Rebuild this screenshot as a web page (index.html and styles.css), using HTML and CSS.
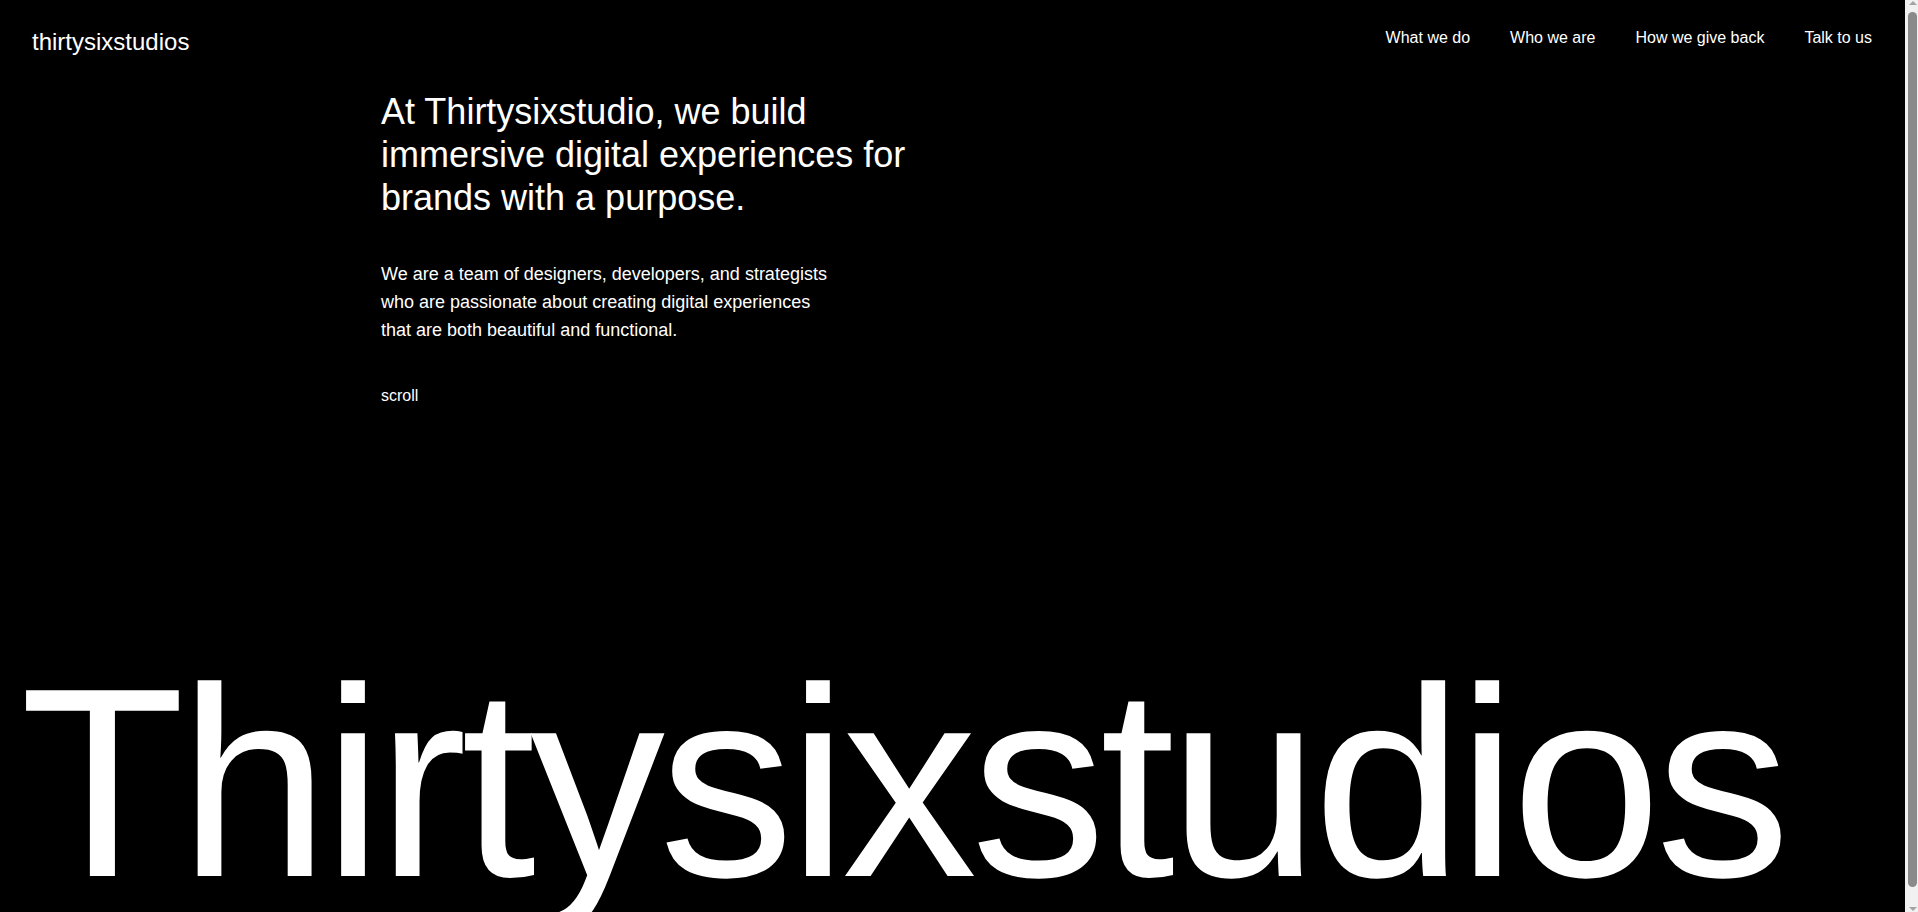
FILE: index.html
```html
<!DOCTYPE html>
<html lang="en">
<head>
<meta charset="utf-8">
<title>thirtysixstudios</title>
<link rel="stylesheet" href="styles.css">
</head>
<body>
<div class="page">
  <header class="site-header">
    <a class="logo" href="#">thirtysixstudios</a>
    <nav class="nav">
      <a href="#">What we do</a>
      <a href="#">Who we are</a>
      <a href="#">How we give back</a>
      <a href="#">Talk to us</a>
    </nav>
  </header>
  <main>
    <section class="hero">
      <h1 class="hero-title">At Thirtysixstudio, we build immersive digital experiences for brands with a purpose.</h1>
      <p class="hero-text">We are a team of designers, developers, and strategists who are passionate about creating digital experiences that are both beautiful and functional.</p>
      <div class="scroll">scroll</div>
    </section>
    <div class="big-title">Thirtysixstudios</div>
  </main>
</div>
<div class="scrollbar" aria-hidden="true">
  <span class="sb-arrow sb-up"></span>
  <span class="sb-thumb"></span>
  <span class="sb-arrow sb-down"></span>
</div>
</body>
</html>
```
FILE: styles.css
```css
html, body {
  margin: 0;
  padding: 0;
  background: #000;
  overflow: hidden;
}
body {
  color: #fff;
  font-family: "Liberation Sans", Arial, sans-serif;
  height: 100vh;
}
a {
  color: inherit;
  text-decoration: none;
}
.page {
  margin-right: 13px;
  height: 100vh;
  overflow: hidden;
}
.site-header {
  display: flex;
  justify-content: space-between;
  align-items: flex-start;
  padding: 28px 33px 0 32px;
}
.logo {
  font-size: 24px;
}
.nav {
  display: flex;
  gap: 40px;
  margin-top: 1px;
  font-size: 16px;
}
.hero {
  padding: 34px 0 0 20%;
}
.hero-title {
  margin: 0;
  max-width: 560px;
  font-size: 36px;
  line-height: 1.2;
  font-weight: 400;
}
.hero-text {
  margin: 40px 0 0;
  max-width: 455px;
  font-size: 18px;
  line-height: 28px;
}
.scroll {
  margin-top: 43px;
  font-size: 16px;
}
.big-title {
  margin-top: 243px;
  padding-left: 20px;
  font-size: 270px;
  line-height: 1;
  letter-spacing: -6px;
  white-space: nowrap;
}
.scrollbar {
  position: fixed;
  top: 0;
  right: 0;
  bottom: 0;
  width: 13px;
  background: #f1f1f1;
  display: flex;
  flex-direction: column;
  align-items: center;
}
.sb-arrow {
  width: 0;
  height: 0;
  border-left: 4px solid transparent;
  border-right: 4px solid transparent;
  margin-left: 2px;
}
.sb-up {
  margin-top: 1px;
  border-bottom: 4px solid #a3a3a3;
}
.sb-down {
  margin-top: auto;
  margin-bottom: 1px;
  border-top: 4px solid #a3a3a3;
}
.sb-thumb {
  margin-top: 7px;
  margin-left: 2px;
  width: 9px;
  height: 875px;
  border-radius: 5px;
  background: #8a8a8a;
}
```
